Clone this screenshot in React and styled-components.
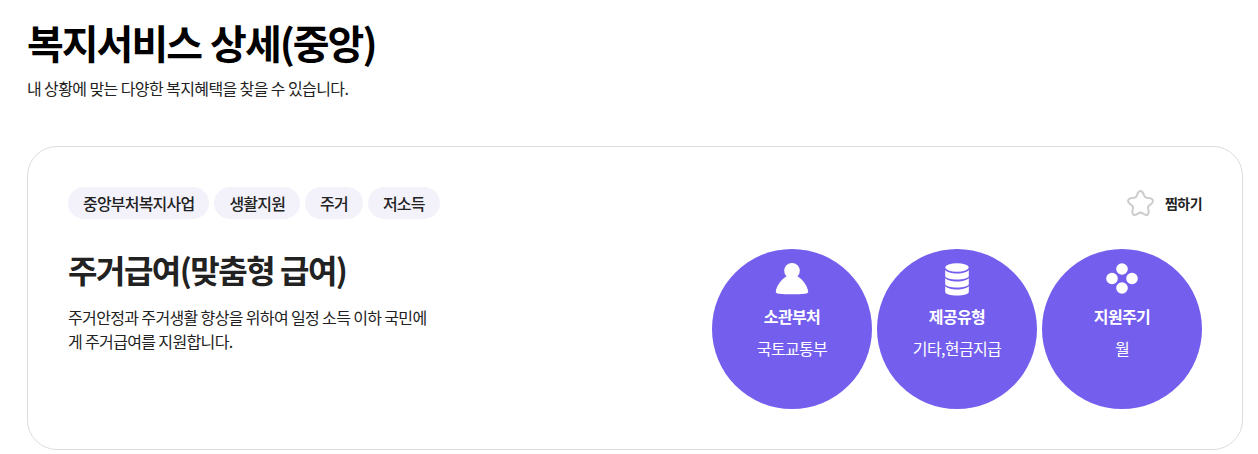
import styled, { createGlobalStyle } from 'styled-components';

const GlobalStyle = createGlobalStyle`
  html, body {
    margin: 0;
    padding: 0;
    background: #fff;
    font-family: 'Noto Sans CJK KR', 'Noto Sans', sans-serif;
    color: #111;
  }
`;

const Page = styled.div`
  width: 1258px;
  height: 454px;
  padding: 14px 15px 0 27px;
  box-sizing: border-box;
  overflow: hidden;
`;

const PageTitle = styled.h1`
  margin: 0;
  font-size: 40px;
  line-height: 56px;
  font-weight: 700;
  letter-spacing: -2px;
  word-spacing: 2px;
  color: #000;
`;

const PageDesc = styled.p`
  margin: 3px 0 0;
  font-size: 16px;
  line-height: 30px;
  letter-spacing: -0.6px;
  color: #222;
`;

const Card = styled.section`
  margin-top: 43px;
  height: 304px;
  box-sizing: border-box;
  border: 1px solid #ddd;
  border-radius: 30px;
  padding: 40px;
`;

const TopRow = styled.div`
  display: flex;
  align-items: center;
  justify-content: space-between;
`;

const Tags = styled.div`
  display: flex;
  gap: 5px;
`;

const Tag = styled.span`
  height: 32px;
  line-height: 32px;
  padding: 0 15px;
  border-radius: 16px;
  background: #f3f2fb;
  font-size: 16px;
  font-weight: 500;
  letter-spacing: -0.8px;
  color: #222;
`;

const Wish = styled.div`
  display: flex;
  align-items: center;
  gap: 11px;
  font-size: 14px;
  font-weight: 700;
  letter-spacing: -0.56px;
  color: #222;
`;

const Body = styled.div`
  display: flex;
  justify-content: space-between;
  margin-top: 30px;
`;

const Summary = styled.div`
  width: 365px;
`;

const ServiceName = styled.h2`
  margin: 0;
  font-size: 32px;
  line-height: 40px;
  font-weight: 700;
  letter-spacing: -1.5px;
  color: #222;
`;

const ServiceDesc = styled.p`
  margin: 16px 0 0;
  font-size: 16px;
  line-height: 24px;
  letter-spacing: -0.64px;
  color: #222;
  word-break: break-all;
`;

const Circles = styled.div`
  display: flex;
  gap: 5px;
`;

const Circle = styled.div`
  width: 160px;
  height: 160px;
  border-radius: 50%;
  background: #735eee;
  color: #fff;
  display: flex;
  flex-direction: column;
  align-items: center;
  padding-top: 13px;
  box-sizing: border-box;
`;

const IconBox = styled.div`
  width: 36px;
  height: 34px;
  svg {
    display: block;
  }
`;

const CircleLabel = styled.strong`
  margin-top: 8px;
  font-size: 16px;
  line-height: 24px;
  font-weight: 700;
  letter-spacing: -0.64px;
`;

const CircleValue = styled.span`
  margin-top: 8px;
  font-size: 16px;
  line-height: 24px;
  letter-spacing: -0.64px;
`;

const StarIcon = () => (
  <svg width="27" height="28" viewBox="0 0 27 28" fill="none" stroke="#ccc" strokeWidth="2" strokeLinejoin="round">
    <path d="M13.500 2C15.500 2 16.300 4 17 6.200C17.500 7.900 18.300 8.500 20 8.700C23.500 9 26 9.400 26 12C26 14 24.200 15 22.500 16.200C21 17.200 20.700 18 21.100 19.500C21.800 22 22.300 24.400 20.600 25.600C19 26.700 17.300 25.500 15.500 24.300C14.200 23.400 12.800 23.400 11.500 24.300C9.700 25.500 8 26.700 6.400 25.600C4.700 24.400 5.200 22 5.900 19.500C6.300 18 6 17.200 4.500 16.200C2.800 15 1 14 1 12C1 9.400 3.500 9 7 8.700C8.700 8.500 9.500 7.900 10 6.200C10.700 4 11.500 2 13.500 2Z" />
  </svg>
);

const PersonIcon = () => (
  <svg width="36" height="34" viewBox="0 0 36 34" fill="#fff">
    <circle cx="18" cy="8.700" r="7.800" />
    <path d="M12 14.500C7 18 2.500 24 1.800 29.500C1.600 31 3 31.500 5 31.700C13 32.500 23 32.500 31 31.700C33 31.500 34.400 31 34.200 29.500C33.500 24 29 18 24 14.500Z" />
  </svg>
);

const DatabaseIcon = () => (
  <svg width="36" height="34" viewBox="0 0 36 34" fill="#fff">
    <ellipse cx="18" cy="5.500" rx="11.800" ry="4.200" />
    <path d="M6.200 8v6c0 2 5.300 3.500 11.800 3.500s11.800-1.500 11.800-3.500V8c-1.500 2.300-6.300 3.500-11.800 3.500S7.700 10.300 6.200 8z" />
    <path d="M6.200 16v6c0 2 5.300 3.500 11.800 3.500s11.800-1.500 11.800-3.500v-6c-1.500 2.300-6.300 3.500-11.800 3.500S7.700 18.300 6.200 16z" />
    <path d="M6.200 24v6c0 2 5.300 3.500 11.800 3.500s11.800-1.500 11.800-3.500v-6c-1.500 2.300-6.300 3.500-11.800 3.500S7.700 26.300 6.200 24z" />
  </svg>
);

const DotsIcon = () => (
  <svg width="36" height="34" viewBox="0 0 36 34" fill="#fff">
    <circle cx="18" cy="7" r="5.800" />
    <circle cx="8" cy="16.500" r="5.800" />
    <circle cx="28" cy="16.500" r="5.800" />
    <circle cx="18" cy="26" r="5.800" />
  </svg>
);

const infoList = [
  { id: 0, label: '소관부처', value: '국토교통부', Icon: PersonIcon },
  { id: 1, label: '제공유형', value: '기타,현금지급', Icon: DatabaseIcon },
  { id: 2, label: '지원주기', value: '월', Icon: DotsIcon },
];

const tagList = ['중앙부처복지사업', '생활지원', '주거', '저소득'];

function App() {
  return (
    <Page>
      <GlobalStyle />
      <PageTitle>복지서비스 상세(중앙)</PageTitle>
      <PageDesc>내 상황에 맞는 다양한 복지혜택을 찾을 수 있습니다.</PageDesc>
      <Card>
        <TopRow>
          <Tags>
            {tagList.map(tag => (
              <Tag key={tag}>{tag}</Tag>
            ))}
          </Tags>
          <Wish>
            <StarIcon />
            찜하기
          </Wish>
        </TopRow>
        <Body>
          <Summary>
            <ServiceName>주거급여(맞춤형 급여)</ServiceName>
            <ServiceDesc>
              주거안정과 주거생활 향상을 위하여 일정 소득 이하 국민에게 주거급여를 지원합니다.
            </ServiceDesc>
          </Summary>
          <Circles>
            {infoList.map(({ id, label, value, Icon }) => (
              <Circle key={id}>
                <IconBox>
                  <Icon />
                </IconBox>
                <CircleLabel>{label}</CircleLabel>
                <CircleValue>{value}</CircleValue>
              </Circle>
            ))}
          </Circles>
        </Body>
      </Card>
    </Page>
  );
}

export default App;
